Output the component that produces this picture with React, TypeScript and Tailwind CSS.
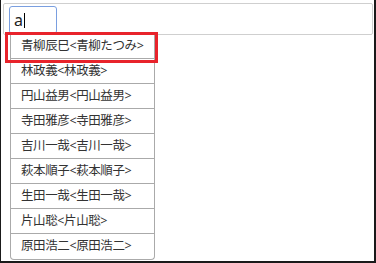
const names = [
  '青柳辰巳<青柳たつみ>',
  '林政義<林政義>',
  '円山益男<円山益男>',
  '寺田雅彦<寺田雅彦>',
  '吉川一哉<吉川一哉>',
  '萩本順子<萩本順子>',
  '生田一哉<生田一哉>',
  '片山聡<片山聡>',
  '原田浩二<原田浩二>',
];

const App: React.FC = () => {
  return (
    <div
      className="relative h-[263px] w-[376px] overflow-hidden border-l border-r-2 border-b-2 border-[#1a1a1a] bg-white text-[#333]"
      style={{ fontFamily: '"Noto Sans", "Noto Sans CJK JP", sans-serif' }}
    >
      <div className="ml-[2px] mt-[3px] flex h-[32px] w-[370px] items-start rounded-[2px] border border-[#cfcfcf] bg-white pl-[5px] pt-[2px]">
        <div className="flex h-[28px] w-[48px] items-center rounded-[3px] border border-[#7a9fe0] pl-[4px] text-[16px] leading-none text-[#222]">
          a<span className="ml-[1px] h-[15px] w-px bg-black" />
        </div>
      </div>
      <ul className="ml-[9px] mt-[-1px] w-[145px] overflow-hidden rounded-b-[4px] border border-t-0 border-[#aaa] bg-white">
        {names.map((n, i) => (
          <li
            key={n}
            className={`flex h-[25px] items-center pl-[10px] text-[12.5px] leading-none tracking-[-0.4px] ${
              i < names.length - 1 ? 'border-b border-[#aaa]' : ''
            }`}
          >
            {n}
          </li>
        ))}
      </ul>
      <div className="absolute left-[4px] top-[32px] h-[31px] w-[153px] border-[3px] border-[#e8232b]" />
    </div>
  );
};

export default App;
